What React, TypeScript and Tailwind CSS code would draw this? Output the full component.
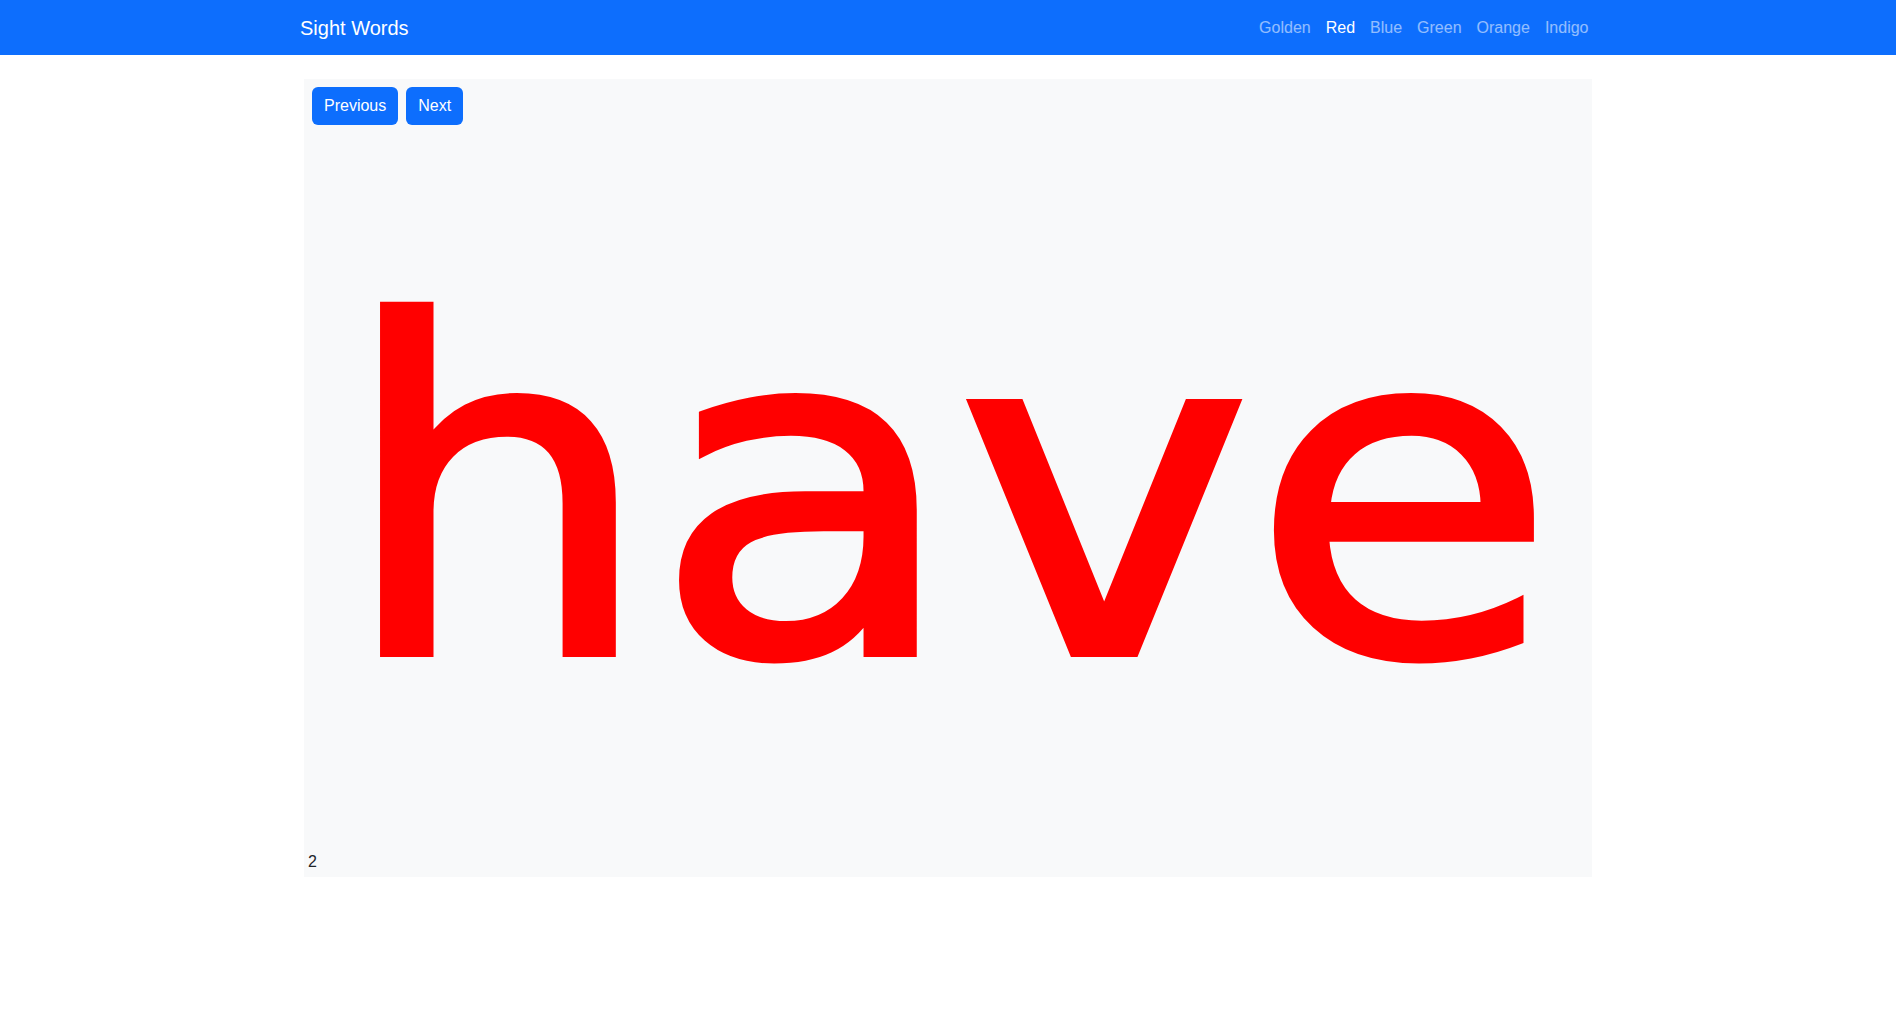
const links = ['Golden', 'Red', 'Blue', 'Green', 'Orange', 'Indigo'];

export default function App() {
  const active = 'Red';

  return (
    <div className="min-h-screen w-[1896px] bg-white font-['Liberation_Sans',Arial,sans-serif] text-[#212529]">
      {/* Navbar */}
      <nav className="bg-[#0d6efd] h-[55px]">
        <div className="mx-auto max-w-[1320px] px-3 h-full flex items-center justify-between">
          <span className="text-[20px] text-white">Sight Words</span>
          <ul className="flex">
            {links.map((l) => (
              <li
                key={l}
                className={
                  l === active
                    ? 'px-[7.5px] py-2 text-base text-white'
                    : 'px-[7.5px] py-2 text-base text-white/55'
                }
              >
                {l}
              </li>
            ))}
          </ul>
        </div>
      </nav>

      {/* Word card */}
      <div className="mx-auto max-w-[1320px] px-3 mt-6">
        <div className="mx-1 bg-[#f8f9fa] h-[798px] flex flex-col">
          <div className="flex gap-2 p-2">
            <button className="h-[38px] px-3 rounded-md bg-[#0d6efd] text-white text-base">
              Previous
            </button>
            <button className="h-[38px] px-3 rounded-md bg-[#0d6efd] text-white text-base">
              Next
            </button>
          </div>
          <div className="flex-1 flex items-center justify-center pt-2">
            <span className="inline-block scale-x-[1.085] font-['DejaVu_Sans',sans-serif] text-[457px] leading-none text-[#ff0000] [-webkit-text-stroke:8px_#ff0000]">
              have
            </span>
          </div>
          <div className="px-1 pb-[3px] text-base">2</div>
        </div>
      </div>
    </div>
  );
}
